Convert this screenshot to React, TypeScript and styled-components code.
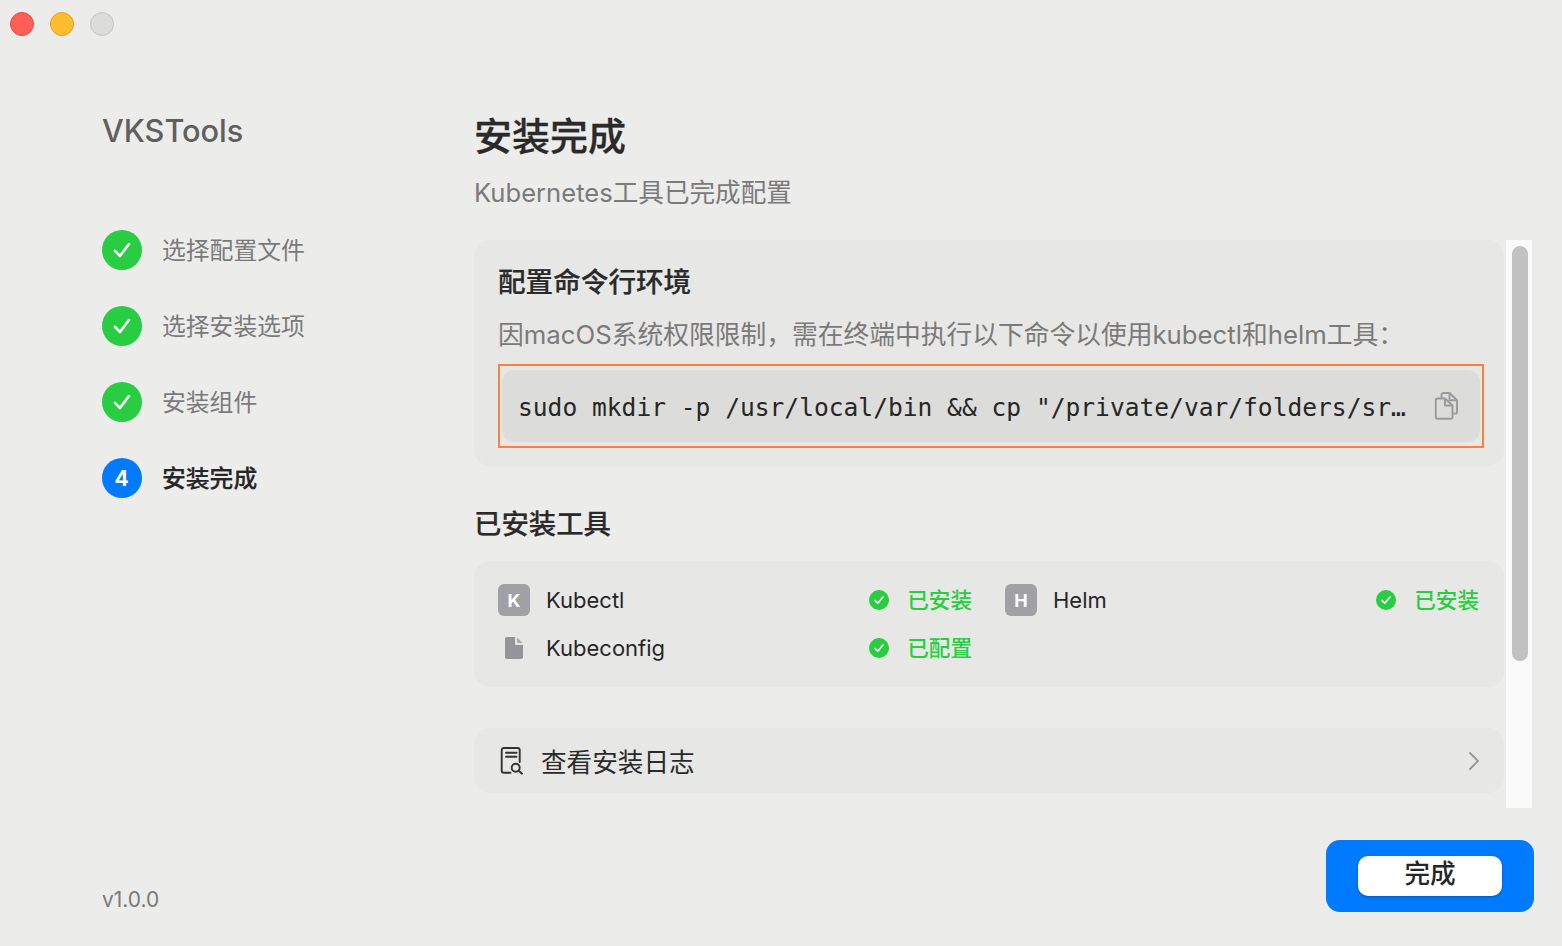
import React from 'react'
import styled, { createGlobalStyle } from 'styled-components'

const SANS = `Inter, "Noto Sans CJK SC", sans-serif`

const GlobalStyle = createGlobalStyle`
  html, body {
    margin: 0;
    padding: 0;
    background: #ececea;
  }
  * {
    box-sizing: border-box;
  }
`

const Page = styled.div`
  width: 1562px;
  height: 946px;
  display: flex;
  flex-direction: column;
  overflow: hidden;
  background: #ececea;
  font-family: ${SANS};
  color: #262626;
`
const TitleBar = styled.div`
  height: 48px;
  flex: none;
  display: flex;
  align-items: center;
  gap: 16px;
  padding-left: 10px;
`
const Light = styled.span<{ $fill: string; $edge: string }>`
  width: 24px;
  height: 24px;
  border-radius: 50%;
  background: ${(p) => p.$fill};
  border: 1px solid ${(p) => p.$edge};
`
const Body = styled.div`
  flex: 1;
  display: flex;
  padding-left: 102px;
`
const Sidebar = styled.aside`
  width: 372px;
  flex: none;
  display: flex;
  flex-direction: column;
  padding-top: 62px;
`
const Brand = styled.div`
  font-size: 30.7px;
  line-height: 42px;
  font-weight: 500;
  color: #5f5f5f;
  margin-bottom: 78px;
`
const Steps = styled.ol`
  list-style: none;
  margin: 0;
  padding: 0;
  display: flex;
  flex-direction: column;
  gap: 36px;
`
const Step = styled.li`
  display: flex;
  align-items: center;
  gap: 20px;
  height: 40px;
`
const StepDot = styled.span<{ $color: string }>`
  width: 40px;
  height: 40px;
  border-radius: 50%;
  background: ${(p) => p.$color};
  color: #fff;
  display: flex;
  align-items: center;
  justify-content: center;
  font-size: 21px;
  font-weight: 700;
  padding-right: 1px;
`
const StepLabel = styled.span<{ $active?: boolean }>`
  font-size: 23.8px;
  padding-bottom: 4px;
  font-weight: ${(p) => (p.$active ? 500 : 400)};
  color: ${(p) => (p.$active ? '#262626' : '#7a7a7a')};
  -webkit-text-stroke: ${(p) => (p.$active ? '0.2px currentColor' : '0')};
`
const Version = styled.div`
  margin-top: auto;
  padding-bottom: 33px;
  font-size: 21px;
  line-height: 26px;
  color: #7a7a7a;
`
const Main = styled.main`
  flex: 1;
  display: flex;
  flex-direction: column;
  padding-top: 62px;
`
const Heading = styled.h1`
  margin: 0;
  font-size: 38px;
  line-height: 52px;
  font-weight: 500;
  color: #2a2a2a;
  -webkit-text-stroke: 0.3px currentColor;
`
const Subheading = styled.p`
  margin: 13px 0 29px;
  font-size: 25.6px;
  line-height: 36px;
  color: #7a7a7a;
`
const ScrollArea = styled.div`
  position: relative;
  width: 1058px;
  height: 568px;
  flex: none;
  padding-right: 28px;
  overflow: hidden;
  display: flex;
  flex-direction: column;
`
const Track = styled.div`
  position: absolute;
  top: 0;
  right: 0;
  bottom: 0;
  width: 26px;
  background: #fafafa;
`
const Thumb = styled.div`
  position: absolute;
  top: 6px;
  left: 6px;
  width: 16px;
  height: 415px;
  border-radius: 8px;
  background: #c1c1c1;
`
const Card = styled.section`
  background: #e7e7e5;
  border-radius: 16px;
`
const CommandCard = styled(Card)`
  height: 226px;
  padding: 24px 20px 18px 24px;
`
const CardTitle = styled.h2`
  margin: 0;
  font-size: 27.6px;
  line-height: 36px;
  font-weight: 500;
  color: #2a2a2a;
  -webkit-text-stroke: 0.2px currentColor;
`
const CardText = styled.p`
  margin: 17px 0 11px;
  font-size: 25.75px;
  line-height: 36px;
  color: #7a7a7a;
  white-space: nowrap;
`
const CommandFrame = styled.div`
  height: 84px;
  border: 2px solid #ff7f41;
  padding: 4px 2px;
`
const CommandBox = styled.div`
  height: 72px;
  border-radius: 12px;
  background: #dcdcda;
  display: flex;
  align-items: center;
  justify-content: space-between;
  padding: 0 22px 0 16px;
`
const Code = styled.code`
  font-family: "DejaVu Sans Mono", monospace;
  font-size: 24.58px;
  padding-top: 2px;
  color: #262626;
  white-space: nowrap;
`
const SectionTitle = styled.h2`
  margin: 38px 0 17px;
  font-size: 27.4px;
  line-height: 40px;
  font-weight: 500;
  color: #2a2a2a;
  -webkit-text-stroke: 0.2px currentColor;
`
const ToolsCard = styled(Card)`
  height: 126px;
  padding: 23px 24px 0;
  display: grid;
  grid-template-columns: 474px 474px;
  column-gap: 33px;
  row-gap: 16px;
  align-content: start;
`
const Tool = styled.div`
  height: 32px;
  display: flex;
  align-items: center;
`
const Badge = styled.span`
  width: 32px;
  height: 32px;
  flex: none;
  border-radius: 6px;
  background: #a0a0a5;
  color: #fff;
  font-size: 18px;
  font-weight: 700;
  display: flex;
  align-items: center;
  justify-content: center;
`
const IconSlot = styled.span`
  width: 32px;
  height: 32px;
  flex: none;
  display: flex;
  align-items: center;
  justify-content: center;
`
const ToolName = styled.span`
  margin-left: 16px;
  font-size: 22px;
  color: #262626;
  flex: 1;
`
const Status = styled.span`
  display: flex;
  align-items: center;
  gap: 18px;
  color: #28cd41;
`
const StatusText = styled.span`
  font-size: 21.6px;
  font-weight: 500;
  padding-bottom: 4px;
`
const LogCard = styled(Card)`
  height: 65px;
  margin-top: 41px;
  padding: 0 24px 0 26px;
  display: flex;
  align-items: center;
  flex: none;
`
const LogLabel = styled.span`
  margin-left: 15px;
  font-size: 25.6px;
  color: #2a2a2a;
  flex: 1;
`
const Footer = styled.div`
  display: flex;
  justify-content: flex-end;
  margin-top: 32px;
  margin-right: 28px;
`
const ButtonFrame = styled.div`
  width: 208px;
  height: 72px;
  border-radius: 14px;
  background: #007aff;
  display: flex;
  align-items: center;
  justify-content: center;
`
const DoneButton = styled.button`
  width: 144px;
  height: 40px;
  border: none;
  border-radius: 10px;
  background: #fff;
  box-shadow: 0 1px 3px rgba(0, 0, 0, 0.3);
  font-family: ${SANS};
  font-size: 25.6px;
  line-height: 26px;
  font-weight: 500;
  color: #262626;
  padding: 0 0 4px;
`

const Check = ({ size, width }: { size: number; width: number }) => (
  <svg width={size} height={size} viewBox="0 0 24 24" fill="none" stroke="#fff" strokeWidth={width} strokeLinecap="round" strokeLinejoin="round">
    <path d="M5 12.8 10 18 19 6" />
  </svg>
)

const StatusIcon = () => (
  <svg width="20" height="20" viewBox="0 0 20 20">
    <circle cx="10" cy="10" r="10" fill="#28cd41" />
    <path d="M6 10.4 8.8 13.2 14 7" fill="none" stroke="#fff" strokeWidth="1.6" strokeLinecap="round" strokeLinejoin="round" />
  </svg>
)

const FileIcon = () => (
  <svg width="18" height="22" viewBox="0 0 18 22">
    <path d="M2 0H10V6.5C10 7.3 10.7 8 11.5 8H18V20C18 21.1 17.1 22 16 22H2C.9 22 0 21.1 0 20V2C0 .9.9 0 2 0Z" fill="#949499" />
    <path d="M12 0.4 17.6 6H12.8C12.4 6 12 5.6 12 5.2Z" fill="#a9a9ae" />
  </svg>
)

const CopyIcon = () => (
  <svg width="24" height="28" viewBox="0 0 24 28" fill="none" stroke="#9a9a9d" strokeWidth="1.9" strokeLinejoin="round">
    <path d="M7.5 6V2.8C7.5 1.8 8.2 1 9.2 1H15.5L23 8.2V20C23 21 22.3 21.6 21.4 21.6H18.5" />
    <path d="M15.5 1V8.2H23" />
    <path d="M3.5 6.5H11L18.5 13.5V25C18.5 26 17.8 26.8 16.8 26.8H3.5C2.5 26.8 1.8 26 1.8 25V8.2C1.8 7.2 2.5 6.5 3.5 6.5Z" />
    <path d="M11 6.5V13.5H18.5" />
  </svg>
)

const LogIcon = () => (
  <svg width="26" height="28" viewBox="0 0 26 28" fill="none" stroke="#333" strokeWidth="1.9" strokeLinecap="round" strokeLinejoin="round">
    <path d="M10.5 25.7H4C2.6 25.7 1.7 24.8 1.7 23.4V3.2C1.7 2 2.6 1 3.8 1H17.6C18.8 1 19.7 2 19.7 3.2V15" />
    <path d="M6 5.7H16.5M6 9.7H16.5" />
    <circle cx="15.7" cy="20.7" r="4" />
    <path d="M18.7 23.7 22 26.7" />
  </svg>
)

const Chevron = () => (
  <svg width="12" height="20" viewBox="0 0 12 20" fill="none" stroke="#949499" strokeWidth="1.8">
    <path d="M1.5 1.5 10 10 1.5 18.5" />
  </svg>
)

const doneSteps = ['选择配置文件', '选择安装选项', '安装组件']

const App = () => {
  return (
    <Page>
      <GlobalStyle />
      <TitleBar>
        <Light $fill="#ff5f57" $edge="#e5484d" />
        <Light $fill="#febc2e" $edge="#e0a21e" />
        <Light $fill="#dcdcdb" $edge="#c6c6c5" />
      </TitleBar>
      <Body>
        <Sidebar>
          <Brand>VKSTools</Brand>
          <Steps>
            {doneSteps.map((label) => (
              <Step key={label}>
                <StepDot $color="#28cd41">
                  <Check size={24} width={2.6} />
                </StepDot>
                <StepLabel>{label}</StepLabel>
              </Step>
            ))}
            <Step>
              <StepDot $color="#007aff">4</StepDot>
              <StepLabel $active>安装完成</StepLabel>
            </Step>
          </Steps>
          <Version>v1.0.0</Version>
        </Sidebar>
        <Main>
          <Heading>安装完成</Heading>
          <Subheading>Kubernetes工具已完成配置</Subheading>
          <ScrollArea>
            <CommandCard>
              <CardTitle>配置命令行环境</CardTitle>
              <CardText>因macOS系统权限限制，需在终端中执行以下命令以使用kubectl和helm工具：</CardText>
              <CommandFrame>
                <CommandBox>
                  <Code>sudo mkdir -p /usr/local/bin &amp;&amp; cp "/private/var/folders/sr…</Code>
                  <CopyIcon />
                </CommandBox>
              </CommandFrame>
            </CommandCard>
            <SectionTitle>已安装工具</SectionTitle>
            <ToolsCard>
              <Tool>
                <Badge>K</Badge>
                <ToolName>Kubectl</ToolName>
                <Status><StatusIcon /><StatusText>已安装</StatusText></Status>
              </Tool>
              <Tool>
                <Badge>H</Badge>
                <ToolName>Helm</ToolName>
                <Status><StatusIcon /><StatusText>已安装</StatusText></Status>
              </Tool>
              <Tool>
                <IconSlot><FileIcon /></IconSlot>
                <ToolName>Kubeconfig</ToolName>
                <Status><StatusIcon /><StatusText>已配置</StatusText></Status>
              </Tool>
            </ToolsCard>
            <LogCard>
              <LogIcon />
              <LogLabel>查看安装日志</LogLabel>
              <Chevron />
            </LogCard>
            <Track>
              <Thumb />
            </Track>
          </ScrollArea>
          <Footer>
            <ButtonFrame>
              <DoneButton>完成</DoneButton>
            </ButtonFrame>
          </Footer>
        </Main>
      </Body>
    </Page>
  )
}

export default App
